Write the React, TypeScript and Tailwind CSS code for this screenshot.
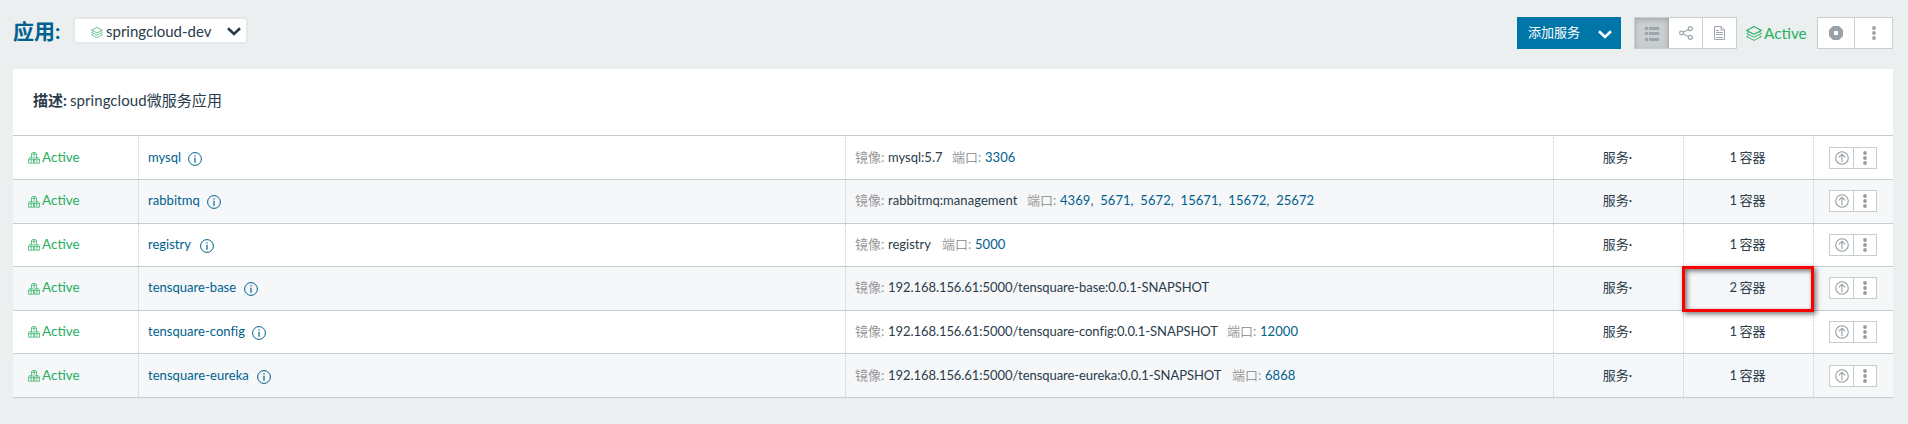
import React from "react";

const FONT = "font-['Lato','Noto_Sans_CJK_SC',sans-serif]";

const rows = [
  { name: "mysql", image: "mysql:5.7", ports: ["3306"], count: 1, h: "h-[44px] pt-px", bg: "bg-white", nameW: "w-[33px]", imgW: "w-[54px]" },
  { name: "rabbitmq", image: "rabbitmq:management", ports: ["4369", "5671", "5672", "15671", "15672", "25672"], count: 1, h: "h-[44px]", cell: "pb-px", bg: "bg-[#f5f7f9]", nameW: "w-[52px] tracking-[0.06px]", imgW: "w-[129px] tracking-[0.05px]" },
  { name: "registry", image: "registry", ports: ["5000"], count: 1, h: "h-[43px]", bg: "bg-white", nameW: "w-[45px]", imgW: "w-[44px]" },
  { name: "tensquare-base", image: "192.168.156.61:5000/tensquare-base:0.0.1-SNAPSHOT", ports: [], count: 2, h: "h-[44px]", cell: "pb-px", bg: "bg-[#f5f7f9]", nameW: "w-[89px] tracking-[0.03px]", imgW: "w-[321px] tracking-[-0.06px]" },
  { name: "tensquare-config", image: "192.168.156.61:5000/tensquare-config:0.0.1-SNAPSHOT", ports: ["12000"], count: 1, h: "h-[43px]", bg: "bg-white", nameW: "w-[97px] tracking-[0.03px]", imgW: "w-[329px] tracking-[-0.06px]" },
  { name: "tensquare-eureka", image: "192.168.156.61:5000/tensquare-eureka:0.0.1-SNAPSHOT", ports: ["6868"], count: 1, h: "h-[44px] pt-px", bg: "bg-[#f5f7f9]", nameW: "w-[102px] tracking-[0.05px]", imgW: "w-[334px] tracking-[-0.06px]" },
];

function Layers({ className }: { className: string }) {
  return (
    <svg viewBox="0 0 16 15" className={className} fill="none" stroke="currentColor" strokeWidth="0.9" strokeLinejoin="round">
      <path d="M8 .6 15.4 4.400 8 8.200 .6 4.400Z" strokeWidth="1.1" />
      <path d="M2.600 6.500.7 7.500 8 11.200l7.300-3.700-1.900-1M2.600 9.700.7 10.700 8 14.400l7.300-3.700-1.900-1" />
    </svg>
  );
}

function Boxes() {
  return (
    <svg viewBox="0 0 12 12" className="h-3 w-3 shrink-0" fill="none" stroke="currentColor" strokeWidth="0.7">
      <path d="M3.500 5.500v-4l1-1h3l1 1v4M3.500 2.200h5M6 .5v5M.5 7.200l1-1.600h3L5.700 7.200v4H.5zM.5 7.700h5.200M6.300 7.200l1-1.600h3l1.200 1.600v4H6.300zM6.300 7.700h5.200M3.100 6v5M8.900 6v5" />
    </svg>
  );
}

function Info() {
  return (
    <svg viewBox="0 0 14 14" className="h-3.5 w-3.5 shrink-0" fill="none" stroke="currentColor">
      <circle cx="7" cy="7" r="6.4" strokeWidth="1" />
      <path d="M7 5.800v4.900M7 3.200v1.400" strokeWidth="1.200" />
    </svg>
  );
}

function Up() {
  return (
    <svg viewBox="0 0 14 14" className="h-3.5 w-3.5" fill="none" stroke="currentColor" strokeWidth="1.1">
      <circle cx="7" cy="7" r="6.300" />
      <path d="M7 11.200V3.500M3.800 6.400 7 3.200l3.200 3.200" />
    </svg>
  );
}

function Dots({ className }: { className: string }) {
  return (
    <svg viewBox="0 0 4 14" className={className} fill="currentColor">
      <circle cx="2" cy="2" r="1.900" />
      <circle cx="2" cy="7" r="1.900" />
      <circle cx="2" cy="12" r="1.900" />
    </svg>
  );
}

function Chevron({ className }: { className: string }) {
  return (
    <svg viewBox="0 0 14 9" className={className} fill="none" stroke="currentColor" strokeWidth="2.600">
      <path d="M1 1.300 7 7l6-5.700" />
    </svg>
  );
}

function Header() {
  return (
    <header className="flex h-[69px] items-start pl-[13px] pr-[15px] pt-[17px]">
      <h1 className="mt-px w-[60px] whitespace-nowrap text-[21px] font-bold leading-[26px] text-[#00608e]">应用:</h1>
      <button className="flex h-[27px] w-[175px] items-center rounded-sm border-2 border-[#e4e8ea] bg-white pl-4 text-[#2b3b4a]">
        <Layers className="mt-[3px] h-[11px] w-3 text-[#3fb06e]" />
        <span className="ml-[3px] w-[106px] whitespace-nowrap text-left text-[15px] leading-5">springcloud-dev</span>
        <Chevron className="ml-[15px] mt-[2px] h-[9px] w-[14px]" />
      </button>
      <div className="ml-auto flex h-8 items-center">
        <button className="flex h-8 w-[104px] items-center bg-[#0075a8] pl-[11px] text-white">
          <span className="w-[53px] whitespace-nowrap text-left text-[13px]">添加服务</span>
          <Chevron className="ml-[17px] mt-[2px] h-[9px] w-[14px]" />
        </button>
        <div className="ml-[13px] flex h-8 w-[103px] border border-[#c8cdd0] bg-white text-[#9da6ad]">
          <span className="flex w-[34px] items-center justify-center border-r border-[#aab2b7] bg-[#c9ced1] shadow-[inset_0_2px_5px_rgba(0,0,0,0.18)]">
            <svg viewBox="0 0 14 14" className="mt-[2px] h-3.5 w-3.5" fill="currentColor" shapeRendering="crispEdges"><path d="M0 0h3v3H0zM4 0h10v3H4zM0 5h3v3H0zM4 5h10v3H4zM0 11h3v3H0zM4 11h10v3H4z" /></svg>
          </span>
          <span className="flex w-[34px] items-center justify-center border-r border-[#c8cdd0]">
            <svg viewBox="0 0 14 14" className="h-3.5 w-3.5" fill="none" stroke="currentColor" strokeWidth="1.200"><circle cx="2.400" cy="7" r="1.800" /><circle cx="11.300" cy="2.700" r="2" /><circle cx="11.300" cy="11.300" r="2" /><path d="m4 6.200 5.500-2.700M4 7.800l5.500 2.700" /></svg>
          </span>
          <span className="flex flex-1 items-center justify-center">
            <svg viewBox="0 0 11 14" className="h-3.5 w-[11px]" fill="none" stroke="currentColor"><path d="M.5.5h6.500l3.500 3.500v9.500H.5zM7 .5V4h3.500M2 4.500h3M2 6.500h7M2 8.500h7M2 11.500h7" /></svg>
          </span>
        </div>
        <Layers className="ml-[9px] h-[15px] w-4 text-[#27ae60]" />
        <span className="ml-[2px] w-[42px] text-[15.3px] leading-5 text-[#27ae60]">Active</span>
        <div className="ml-[11px] flex h-8 w-[76px] border border-[#c8cdd0] bg-white text-[#9aa2a8]">
          <span className="flex w-[37px] items-center justify-center border-r border-[#c8cdd0]">
            <svg viewBox="0 0 14 14" className="h-3.5 w-3.5" fill="currentColor" fillRule="evenodd"><path d="M4 0h6l4 4v6l-4 4H4l-4-4V4zM5 5v4h4V5z" /></svg>
          </span>
          <span className="flex flex-1 items-center justify-center"><Dots className="h-3.5 w-1" /></span>
        </div>
      </div>
    </header>
  );
}

export default function App() {
  return (
    <div className={`h-[424px] w-[1908px] overflow-hidden bg-[#ebeff0] text-[#2b3b4a] ${FONT}`}>
      <Header />
      <main className="ml-[13px] w-[1880px] bg-white">
        <div className="flex h-[67px] items-center border-b border-[#c6cdcf] pb-[5px] pl-5 text-[15px] leading-5">
          <b className="w-[37px] whitespace-nowrap">描述:</b>
          <span className="whitespace-nowrap tracking-[0.06px]">springcloud微服务应用</span>
        </div>
        {rows.map((r) => (
          <div key={r.name} className={`flex border-b border-[#c6cdcf] text-[13px] ${r.h} ${r.bg}`}>
            <div className="flex w-[126px] items-center gap-[2px] border-r border-dotted border-[#c6cdcf] pb-[2px] pl-[15px] text-[#27ae60]">
              <span className="mt-[2px]"><Boxes /></span>
              <span className="text-[13.5px]">Active</span>
            </div>
            <div className={`flex w-[707px] items-center border-r border-dotted border-[#c6cdcf] pl-[9px] text-[#00608e] ${r.cell ?? ""}`}>
              <span className={`whitespace-nowrap ${r.nameW}`}>{r.name}</span>
              <span className="ml-[7px] mt-px"><Info /></span>
            </div>
            <div className={`flex w-[708px] items-center whitespace-nowrap border-r border-dotted border-[#c6cdcf] pl-[9px] ${r.cell ?? ""}`}>
              <span className="w-[33px] text-[#999]">镜像:</span>
              <span className={r.imgW}>{r.image}</span>
              {r.ports.length > 0 && <span className="ml-[10px] w-[33px] text-[#999]">端口:</span>}
              <span className="whitespace-pre tracking-[0.06px] text-[#00608e]">{r.ports.join(",  ")}</span>
            </div>
            <div className={`flex w-[130px] items-center justify-center border-r border-dotted border-[#c6cdcf] pr-[2px] ${r.cell ?? ""}`}>服务·</div>
            <div className={`relative flex w-[130px] items-center justify-center border-r border-dotted border-[#c6cdcf] pr-[2px] [word-spacing:-1px] ${r.cell ?? ""}`}>
              {r.count} 容器
              {r.count === 2 && (
                <div className="absolute -left-[2px] -top-[1px] z-10 h-[46px] w-[132px] border-[3px] border-[#f00] shadow-[2px_2px_5px_rgba(0,0,0,0.55),inset_2px_2px_5px_rgba(0,0,0,0.55)]" />
              )}
            </div>
            <div className={`flex flex-1 items-center pl-[15px] ${r.cell ?? ""}`}>
              <div className="flex h-[22px] w-12 border border-[#c8cdd0] bg-white text-[#959da4]">
                <span className="flex w-6 items-center justify-center border-r border-[#c8cdd0]"><Up /></span>
                <span className="flex flex-1 items-center justify-center"><Dots className="h-[14px] w-1" /></span>
              </div>
            </div>
          </div>
        ))}
      </main>
    </div>
  );
}
